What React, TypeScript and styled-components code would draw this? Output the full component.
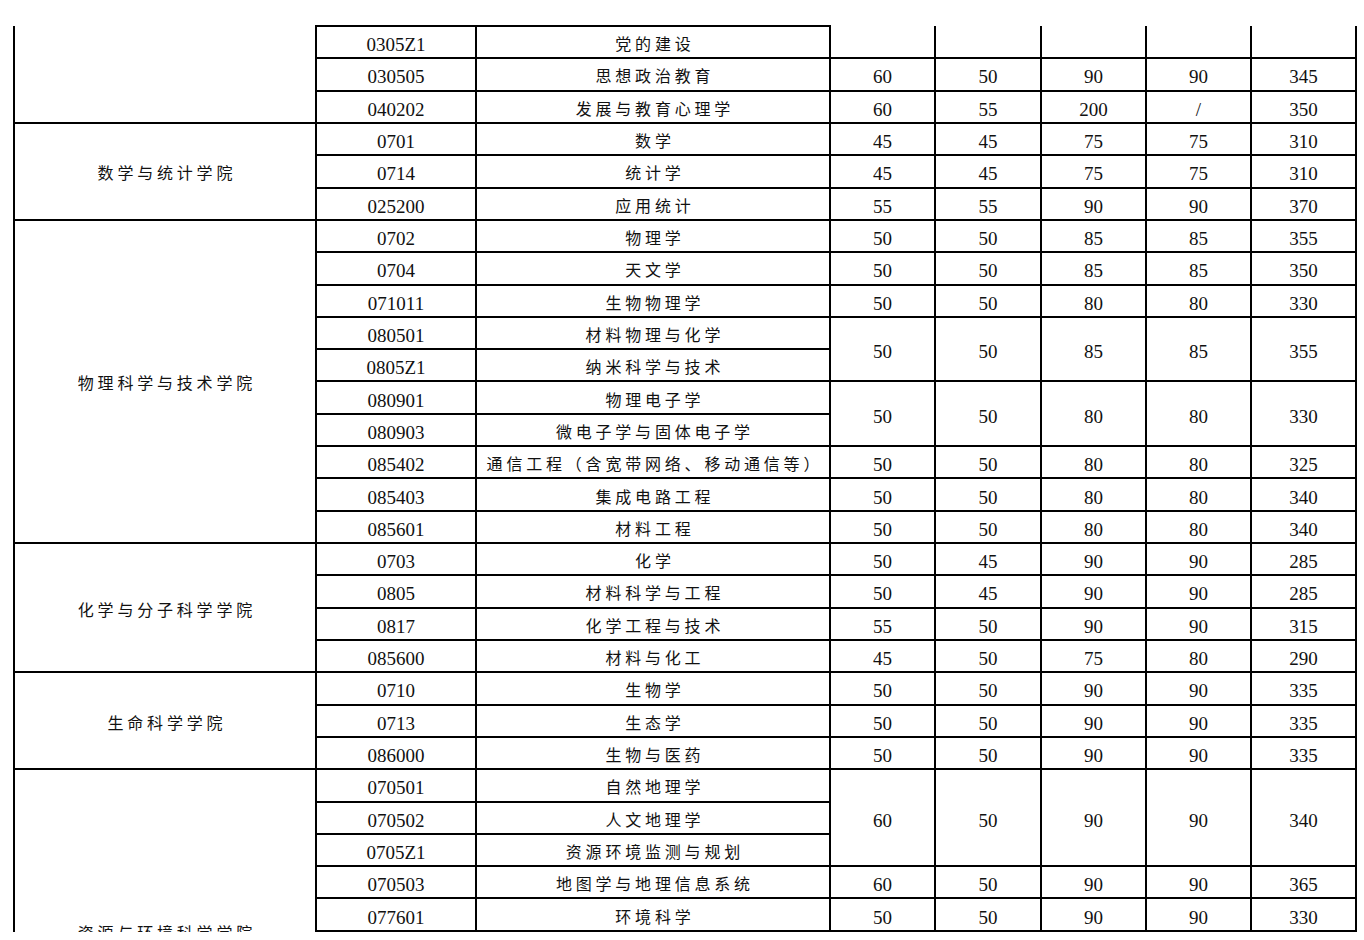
import React from "react";
import styled, { createGlobalStyle } from "styled-components";

const GlobalStyle = createGlobalStyle`
  body {
    margin: 0;
    background: #fff;
  }
`;

const Sheet = styled.div`
  padding: 25px 0 0 13px;
`;

const Viewport = styled.div`
  width: 1344px;
  height: 907px;
  overflow: hidden;
`;

const Table = styled.table`
  width: 1344px;
  border-collapse: collapse;
  table-layout: fixed;
  color: #111;
`;

const Row = styled.tr`
  height: 32.32px;
`;

const Cell = styled.td<{ $open?: boolean }>`
  border: 2px solid #000;
  border-top-style: ${(props) => (props.$open ? "none" : "solid")};
  padding: 0;
  text-align: center;
  vertical-align: middle;
  white-space: nowrap;
`;

const TextCell = styled(Cell)`
  font-family: "Noto Sans CJK SC", "Liberation Serif", sans-serif;
  font-size: 16px;
  letter-spacing: 3.8px;
  padding: 2px 0 0 3.8px;
  line-height: 20px;
`;

const NumberCell = styled(Cell)`
  font-family: "Liberation Serif", "Noto Sans CJK SC", serif;
  font-size: 19px;
  line-height: 20px;
  padding-top: 6px;
`;

type Line = {
  code: string;
  name: string;
  scores?: string[];
  span?: number;
  open?: boolean;
};

type Group = {
  college: string;
  open?: boolean;
  lines: Line[];
};

const blank = ["", "", "", "", ""];

const groups: Group[] = [
  {
    college: "",
    open: true,
    lines: [
      { code: "0305Z1", name: "党的建设", scores: blank, open: true },
      { code: "030505", name: "思想政治教育", scores: ["60", "50", "90", "90", "345"] },
      { code: "040202", name: "发展与教育心理学", scores: ["60", "55", "200", "/", "350"] },
    ],
  },
  {
    college: "数学与统计学院",
    lines: [
      { code: "0701", name: "数学", scores: ["45", "45", "75", "75", "310"] },
      { code: "0714", name: "统计学", scores: ["45", "45", "75", "75", "310"] },
      { code: "025200", name: "应用统计", scores: ["55", "55", "90", "90", "370"] },
    ],
  },
  {
    college: "物理科学与技术学院",
    lines: [
      { code: "0702", name: "物理学", scores: ["50", "50", "85", "85", "355"] },
      { code: "0704", name: "天文学", scores: ["50", "50", "85", "85", "350"] },
      { code: "071011", name: "生物物理学", scores: ["50", "50", "80", "80", "330"] },
      { code: "080501", name: "材料物理与化学", scores: ["50", "50", "85", "85", "355"], span: 2 },
      { code: "0805Z1", name: "纳米科学与技术" },
      { code: "080901", name: "物理电子学", scores: ["50", "50", "80", "80", "330"], span: 2 },
      { code: "080903", name: "微电子学与固体电子学" },
      { code: "085402", name: "通信工程（含宽带网络、移动通信等）", scores: ["50", "50", "80", "80", "325"] },
      { code: "085403", name: "集成电路工程", scores: ["50", "50", "80", "80", "340"] },
      { code: "085601", name: "材料工程", scores: ["50", "50", "80", "80", "340"] },
    ],
  },
  {
    college: "化学与分子科学学院",
    lines: [
      { code: "0703", name: "化学", scores: ["50", "45", "90", "90", "285"] },
      { code: "0805", name: "材料科学与工程", scores: ["50", "45", "90", "90", "285"] },
      { code: "0817", name: "化学工程与技术", scores: ["55", "50", "90", "90", "315"] },
      { code: "085600", name: "材料与化工", scores: ["45", "50", "75", "80", "290"] },
    ],
  },
  {
    college: "生命科学学院",
    lines: [
      { code: "0710", name: "生物学", scores: ["50", "50", "90", "90", "335"] },
      { code: "0713", name: "生态学", scores: ["50", "50", "90", "90", "335"] },
      { code: "086000", name: "生物与医药", scores: ["50", "50", "90", "90", "335"] },
    ],
  },
  {
    college: "资源与环境科学学院",
    lines: [
      { code: "070501", name: "自然地理学", scores: ["60", "50", "90", "90", "340"], span: 3 },
      { code: "070502", name: "人文地理学" },
      { code: "0705Z1", name: "资源环境监测与规划" },
      { code: "070503", name: "地图学与地理信息系统", scores: ["60", "50", "90", "90", "365"] },
      { code: "077601", name: "环境科学", scores: ["50", "50", "90", "90", "330"] },
      // rows that continue past the bottom of the page
      { code: "", name: "", scores: blank },
      { code: "", name: "", scores: blank },
      { code: "", name: "", scores: blank },
      { code: "", name: "", scores: blank },
      { code: "", name: "", scores: blank },
    ],
  },
];

const widths = [302, 160, 354, 105, 106, 105, 105, 105];

export default function App() {
  return (
    <>
      <GlobalStyle />
      <Sheet>
        <Viewport>
          <Table>
            <colgroup>
              {widths.map((w, i) => (
                <col key={i} style={{ width: w }} />
              ))}
            </colgroup>
            <tbody>
              {groups.map((group, gi) =>
                group.lines.map((line, li) => (
                  <Row key={`${gi}-${li}`}>
                    {li === 0 && (
                      <TextCell rowSpan={group.lines.length} $open={group.open}>
                        {group.college}
                      </TextCell>
                    )}
                    <NumberCell>{line.code}</NumberCell>
                    <TextCell>{line.name}</TextCell>
                    {line.scores &&
                      line.scores.map((s, si) => (
                        <NumberCell key={si} rowSpan={line.span} $open={line.open}>
                          {s}
                        </NumberCell>
                      ))}
                  </Row>
                ))
              )}
            </tbody>
          </Table>
        </Viewport>
      </Sheet>
    </>
  );
}
